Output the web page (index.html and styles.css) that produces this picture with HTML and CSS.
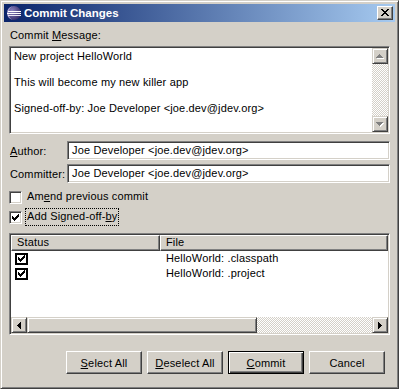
FILE: index.html
```html
<!DOCTYPE html>
<html>
<head>
<meta charset="utf-8">
<title>Commit Changes</title>
<link rel="stylesheet" href="styles.css">
</head>
<body>
<div class="window">
  <div class="titlebar">
    <svg class="app-icon" width="16" height="16" viewBox="0 0 16 16">
      <defs>
        <radialGradient id="g1" cx="0.35" cy="0.35" r="0.8">
          <stop offset="0" stop-color="#8c84c0"/>
          <stop offset="1" stop-color="#2a2260"/>
        </radialGradient>
      </defs>
      <circle cx="8" cy="8" r="7" fill="url(#g1)"/>
      <path d="M8 1a7 7 0 0 0 0 14a5.5 7 0 0 1 0-14z" fill="#b8b0e0" opacity="0.8"/>
      <rect x="2" y="6" width="13" height="1" fill="#ffffff"/>
      <rect x="1" y="8" width="14" height="1" fill="#ffffff"/>
      <rect x="2" y="10" width="13" height="1" fill="#e8e6f4"/>
    </svg>
    <span class="title">Commit Changes</span>
    <div class="close-btn">
      <svg width="8" height="7" viewBox="0 0 8 7" shape-rendering="crispEdges">
        <path d="M0 0h2v1H0z M6 0h2v1H6z M1 1h2v1H1z M5 1h2v1H5z M2 2h4v1H2z M3 3h2v1H3z M2 4h4v1H2z M1 5h2v1H1z M5 5h2v1H5z M0 6h2v1H0z M6 6h2v1H6z" fill="#000"/>
      </svg>
    </div>
  </div>

  <div class="content">
    <div class="msg-label">Commit <u>M</u>essage:</div>
    <div class="textarea">
      <div class="ta-text">
        <div class="ta-line">New project HelloWorld</div>
        <div class="ta-line">&nbsp;</div>
        <div class="ta-line">This will become my new killer app</div>
        <div class="ta-line">&nbsp;</div>
        <div class="ta-line">Signed-off-by: Joe Developer &lt;joe.dev@jdev.org&gt;</div>
      </div>
      <div class="vscroll">
        <div class="sb-btn">
          <svg width="8" height="5" viewBox="0 0 8 5" shape-rendering="crispEdges">
            <path transform="translate(1 1)" d="M3 0h1v1h1v1h1v1h1v1H0V3h1V2h1V1h1z" fill="#fff"/>
            <path d="M3 0h1v1h1v1h1v1h1v1H0V3h1V2h1V1h1z" fill="#808080"/>
          </svg>
        </div>
        <div class="sb-track"></div>
        <div class="sb-btn">
          <svg width="8" height="5" viewBox="0 0 8 5" shape-rendering="crispEdges">
            <path transform="translate(1 1)" d="M0 0h7v1h-1v1h-1v1h-1v1h-1v-1h-1v-1h-1v-1h-1z" fill="#fff"/>
            <path d="M0 0h7v1h-1v1h-1v1h-1v1h-1v-1h-1v-1h-1v-1h-1z" fill="#808080"/>
          </svg>
        </div>
      </div>
    </div>

    <div class="field-row first">
      <div class="field-label"><u>A</u>uthor:</div>
      <div class="input">Joe Developer &lt;joe.dev@jdev.org&gt;</div>
    </div>
    <div class="field-row">
      <div class="field-label">Committer:</div>
      <div class="input">Joe Developer &lt;joe.dev@jdev.org&gt;</div>
    </div>

    <div class="check-row first">
      <span class="cb"></span>
      <span class="cb-label">Am<u>e</u>nd previous commit</span>
    </div>
    <div class="check-row">
      <span class="cb">
        <svg width="7" height="7" viewBox="0 0 7 7" shape-rendering="crispEdges">
          <path d="M6 0h1v1h-1z M5 1h2v1h-2z M0 2h1v1H0z M4 2h3v1h-3z M0 3h2v1H0z M3 3h3v1H3z M0 4h5v1H0z M1 5h3v1H1z M2 6h1v1H2z" fill="#000"/>
        </svg>
      </span>
      <span class="cb-label focus">Add Signed-off-<u>b</u>y</span>
    </div>

    <div class="table">
      <div class="thead">
        <div class="th th-status">Status</div>
        <div class="th th-file">File</div>
      </div>
      <div class="tbody">
        <div class="tr">
          <div class="td td-status">
            <span class="tcb">
              <svg width="7" height="7" viewBox="0 0 7 7" shape-rendering="crispEdges">
                <path d="M6 0h1v1h-1z M5 1h2v1h-2z M0 2h1v1H0z M4 2h3v1h-3z M0 3h2v1H0z M3 3h3v1H3z M0 4h5v1H0z M1 5h3v1H1z M2 6h1v1H2z" fill="#000"/>
              </svg>
            </span>
          </div>
          <div class="td td-file">HelloWorld: .classpath</div>
        </div>
        <div class="tr">
          <div class="td td-status">
            <span class="tcb">
              <svg width="7" height="7" viewBox="0 0 7 7" shape-rendering="crispEdges">
                <path d="M6 0h1v1h-1z M5 1h2v1h-2z M0 2h1v1H0z M4 2h3v1h-3z M0 3h2v1H0z M3 3h3v1H3z M0 4h5v1H0z M1 5h3v1H1z M2 6h1v1H2z" fill="#000"/>
              </svg>
            </span>
          </div>
          <div class="td td-file">HelloWorld: .project</div>
        </div>
      </div>
      <div class="hscroll">
        <div class="sb-btn">
          <svg width="4" height="7" viewBox="0 0 4 7" shape-rendering="crispEdges">
            <path d="M3 0h1v7h-1v-1h-1v-1h-1v-1h-1v-1h1v-1h1v-1h1z" fill="#000"/>
          </svg>
        </div>
        <div class="sb-thumb"></div>
        <div class="sb-track"></div>
        <div class="sb-btn">
          <svg width="4" height="7" viewBox="0 0 4 7" shape-rendering="crispEdges">
            <path d="M0 0h1v1h1v1h1v1h1v1h-1v1h-1v1h-1v1h-1z" fill="#000"/>
          </svg>
        </div>
      </div>
    </div>

    <div class="buttons">
      <button class="btn"><u>S</u>elect All</button>
      <button class="btn"><u>D</u>eselect All</button>
      <button class="btn default"><u>C</u>ommit</button>
      <button class="btn">Cancel</button>
    </div>
  </div>
</div>
</body>
</html>
```

FILE: styles.css
```css
html, body {
  margin: 0;
  padding: 0;
  background: #d4d0c8;
}

body {
  font-family: "Liberation Sans", Arial, sans-serif;
  font-size: 11px;
  letter-spacing: 0.15px;
  color: #000;
}

.window {
  width: 399px;
  height: 389px;
  box-sizing: border-box;
  background: #d4d0c8;
  border: 1px solid;
  border-color: #d4d0c8 #404040 #404040 #d4d0c8;
  box-shadow: inset 1px 1px #ffffff, inset -1px -1px #808080;
  padding: 3px;
  display: flex;
  flex-direction: column;
}

/* Title bar */
.titlebar {
  height: 18px;
  flex: none;
  display: flex;
  align-items: center;
  background: linear-gradient(to right, #0a246a, #a6caf0);
  color: #fff;
}

.app-icon {
  margin-left: 2px;
  flex: none;
}

.title {
  margin-left: 2px;
  font-weight: bold;
  font-size: 11.5px;
  letter-spacing: 0;
  line-height: 18px;
}

.close-btn {
  margin-left: auto;
  margin-right: 2px;
  width: 16px;
  height: 14px;
  box-sizing: border-box;
  background: #d4d0c8;
  border: 1px solid;
  border-color: #ffffff #404040 #404040 #ffffff;
  box-shadow: inset -1px -1px #808080;
  display: flex;
  align-items: center;
  justify-content: center;
  padding: 0 1px 1px 0;
}

.close-btn svg {
  display: block;
}

/* Content */
.content {
  flex: 1;
  display: flex;
  flex-direction: column;
  padding: 7px 5px 0 5px;
}

.msg-label {
  height: 13px;
  line-height: 13px;
  margin-bottom: 4px;
  padding-left: 1px;
}

.textarea {
  height: 88px;
  flex: none;
  box-sizing: border-box;
  background: #fff;
  border: 1px solid;
  border-color: #808080 #ffffff #ffffff #808080;
  box-shadow: inset 1px 1px #404040, inset -1px -1px #d4d0c8;
  padding: 1px;
  display: flex;
}

.ta-text {
  flex: 1;
  padding: 2px 3px;
  line-height: 13px;
  white-space: nowrap;
}

.vscroll {
  width: 16px;
  display: flex;
  flex-direction: column;
}

.sb-btn {
  width: 16px;
  height: 16px;
  flex: none;
  box-sizing: border-box;
  background: #d4d0c8;
  border: 1px solid;
  border-color: #d4d0c8 #404040 #404040 #d4d0c8;
  box-shadow: inset 1px 1px #ffffff, inset -1px -1px #808080;
  display: flex;
  align-items: center;
  justify-content: center;
}

.sb-btn svg {
  display: block;
}

.sb-track {
  flex: 1;
  background-color: #fff;
  background-image: repeating-conic-gradient(#d4d0c8 0 25%, #ffffff 0 50%);
  background-size: 2px 2px;
}

/* Fields */
.field-row {
  display: flex;
  align-items: center;
  height: 19px;
  margin-top: 4px;
}

.field-row.first {
  margin-top: 7px;
}

.field-label {
  width: 58px;
  flex: none;
  padding-left: 1px;
  box-sizing: border-box;
}

.input {
  flex: 1;
  height: 19px;
  box-sizing: border-box;
  background: #fff;
  border: 1px solid;
  border-color: #808080 #ffffff #ffffff #808080;
  box-shadow: inset 1px 1px #404040, inset -1px -1px #d4d0c8;
  padding: 0 4px;
  line-height: 17px;
  white-space: nowrap;
}

/* Checkboxes */
.check-row {
  display: flex;
  align-items: center;
  height: 20px;
}

.check-row.first {
  margin-top: 4px;
}

.cb {
  width: 13px;
  height: 13px;
  flex: none;
  box-sizing: border-box;
  background: #fff;
  border: 1px solid;
  border-color: #808080 #ffffff #ffffff #808080;
  box-shadow: inset 1px 1px #404040, inset -1px -1px #d4d0c8;
  display: flex;
  align-items: center;
  justify-content: center;
}

.cb svg {
  display: block;
}

.cb-label {
  margin-left: 3px;
  padding: 1px 1px 2px 1px;
  border: 1px solid transparent;
  line-height: 13px;
}

.cb-label.focus {
  border: 1px dotted #000;
}

/* Table */
.table {
  margin-top: 6px;
  height: 102px;
  flex: none;
  box-sizing: border-box;
  background: #fff;
  border: 1px solid;
  border-color: #808080 #ffffff #ffffff #808080;
  box-shadow: inset 1px 1px #404040, inset -1px -1px #d4d0c8;
  padding: 1px;
  display: flex;
  flex-direction: column;
}

.thead {
  display: flex;
  height: 16px;
  flex: none;
}

.th {
  box-sizing: border-box;
  height: 16px;
  background: #d4d0c8;
  border: 1px solid;
  border-color: #ffffff #404040 #404040 #ffffff;
  box-shadow: inset -1px -1px #808080;
  padding-left: 5px;
  line-height: 13px;
}

.th-status {
  width: 149px;
  flex: none;
}

.th-file {
  flex: 1;
}

.tbody {
  flex: 1;
  background: #fff;
}

.tr {
  display: flex;
  height: 15px;
  align-items: center;
}

.td-status {
  width: 149px;
  flex: none;
  padding-left: 4px;
  box-sizing: border-box;
  display: flex;
  align-items: center;
}

.td-file {
  flex: 1;
  padding-left: 6px;
  line-height: 15px;
  white-space: nowrap;
}

.tcb {
  width: 13px;
  height: 12px;
  box-sizing: border-box;
  border: 2px solid #000;
  background: #fff;
  display: flex;
  align-items: center;
  justify-content: center;
}

.tcb svg {
  display: block;
}

.hscroll {
  display: flex;
  height: 16px;
  flex: none;
}

.sb-thumb {
  width: 230px;
  height: 16px;
  flex: none;
  box-sizing: border-box;
  background: #d4d0c8;
  border: 1px solid;
  border-color: #d4d0c8 #404040 #404040 #d4d0c8;
  box-shadow: inset 1px 1px #ffffff, inset -1px -1px #808080;
}

/* Buttons */
.buttons {
  display: flex;
  justify-content: flex-end;
  gap: 5px;
  margin-top: 16px;
  padding-right: 5px;
}

.btn {
  width: 76px;
  height: 23px;
  box-sizing: border-box;
  margin: 0;
  padding: 0;
  font-family: "Liberation Sans", Arial, sans-serif;
  font-size: 11px;
  letter-spacing: 0.15px;
  color: #000;
  background: #d4d0c8;
  border: 1px solid;
  border-color: #ffffff #404040 #404040 #ffffff;
  box-shadow: inset -1px -1px #808080;
  border-radius: 0;
}

.btn.default {
  border: 1px solid #000;
  box-shadow: inset 1px 1px #ffffff, inset -1px -1px #404040, inset -2px -2px #808080;
}
```
